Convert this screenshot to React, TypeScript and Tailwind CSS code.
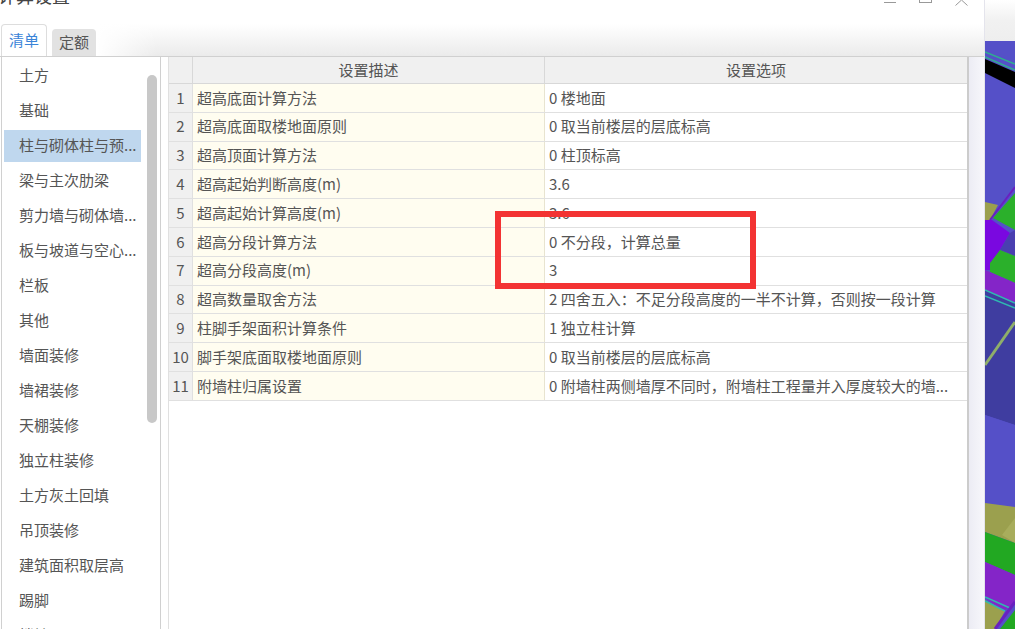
const font = '"Microsoft YaHei", "Noto Sans CJK SC", sans-serif'

const categories = [
  '土方',
  '基础',
  '柱与砌体柱与预...',
  '梁与主次肋梁',
  '剪力墙与砌体墙...',
  '板与坡道与空心...',
  '栏板',
  '其他',
  '墙面装修',
  '墙裙装修',
  '天棚装修',
  '独立柱装修',
  '土方灰土回填',
  '吊顶装修',
  '建筑面积取层高',
  '踢脚',
  '楼地面',
]

const rows = [
  ['超高底面计算方法', '0 楼地面'],
  ['超高底面取楼地面原则', '0 取当前楼层的层底标高'],
  ['超高顶面计算方法', '0 柱顶标高'],
  ['超高起始判断高度(m)', '3.6'],
  ['超高起始计算高度(m)', '3.6'],
  ['超高分段计算方法', '0 不分段，计算总量'],
  ['超高分段高度(m)', '3'],
  ['超高数量取舍方法', '2 四舍五入：不足分段高度的一半不计算，否则按一段计算'],
  ['柱脚手架面积计算条件', '1 独立柱计算'],
  ['脚手架底面取楼地面原则', '0 取当前楼层的层底标高'],
  ['附墙柱归属设置', '0 附墙柱两侧墙厚不同时，附墙柱工程量并入厚度较大的墙...'],
]

// coords are page pixels, the strip of 3d view behind the dialog
const Scene = () => (
  <svg viewBox="985 41 30 588" className="block h-full w-full" preserveAspectRatio="none">
    <rect x="985" y="41" width="30" height="588" fill="#5550c8" />
    <path d="M985 59 L1015 72 V88 L985 73 Z" fill="#000" />
    <path d="M985 52 L1015 64 M985 57 L1015 70" stroke="#2fae8f" strokeWidth="1.5" />
    <path d="M985 202 L998 205 L990 220 L985 220 Z" fill="#9ba04e" />
    <path d="M993 218 L1015 193 V230 Z" fill="#2bb02b" />
    <path d="M990 220 L1015 187" stroke="#6a20c0" strokeWidth="2" />
    <path d="M985 220 L992 220 L1010 233 L1000 250 L990 270 L985 270 Z" fill="#7a08e0" />
    <path d="M1010 233 L1015 230 V256 L1000 250 Z" fill="#4a3fb0" />
    <path d="M1000 250 L1015 256 V283 L990 272 V263 Z" fill="#2bb02b" />
    <path d="M985 270 L990 272 L1015 283 V305 L985 292 Z" fill="#8425c8" />
    <path d="M985 290 L1015 303 V425 L985 415 Z" fill="#3f3da0" />
    <path d="M985 290 L1015 303 M985 296 L1015 308" stroke="#2fb9b0" strokeWidth="1.5" />
    <path d="M985 365 L1015 322" stroke="#8fae6a" strokeWidth="3" />
    <path d="M985 415 L1015 425 V507 L985 503 Z" fill="#5550c8" />
    <path d="M985 503 L1015 507 V543 L985 532 Z" fill="#9ba04e" />
    <path d="M1002 535 L1015 518 V543 Z" fill="#a8ad5c" />
    <path d="M985 532 L1015 543 V575 L985 562 Z" fill="#22a822" />
    <path d="M985 562 L1015 575 V602 L1003 612 L985 597 Z" fill="#8425c8" />
    <path d="M985 600 L1005 611 L995 629 H985 Z" fill="#9ba04e" />
    <path d="M985 597 L1010 608 M985 601 L1005 611" stroke="#2fb9b0" strokeWidth="1.5" />
    <path d="M1015 610 V629 H1000 Z" fill="#22a822" />
    <path d="M1015 602 L995 629" stroke="#6a20c0" strokeWidth="3" />
  </svg>
)

export default function App() {
  return (
    <div className="relative flex h-[629px] w-[1015px] overflow-hidden bg-white text-[15px] text-[#555]" style={{ fontFamily: font }}>
      <div className="flex h-full w-[985px] shrink-0 flex-col border-r border-[#e4e4ec]">
        <div className="flex h-[24px] items-start justify-between pr-[16px]">
          <span className="-ml-[2px] -mt-[18px] text-[18px] leading-[26px] text-[#444]">计算设置</span>
          <div className="flex items-start gap-[23px]">
            <div className="mt-[2px] h-[1px] w-[12px] bg-[#999]" />
            <div className="h-[3px] w-[13px] border-x border-b border-[#999]" />
            <svg width="13" height="6" viewBox="0 0 13 6" className="block">
              <path d="M0.5 5.5 L6.5 0 L12.5 5.5" fill="none" stroke="#999" />
            </svg>
          </div>
        </div>
        <div className="flex h-[32px] items-end pl-[1px]">
          <div className="flex h-[32px] w-[46px] items-center justify-center rounded-t-[4px] border border-b-0 border-[#ddd] bg-white text-[#3a84d8]">清单</div>
          <div className="ml-[5px] flex h-[27px] w-[44px] items-center justify-center rounded-t-[4px] bg-[#e2e2e2]">定额</div>
          <div className="relative ml-[1px] h-full flex-1 bg-gradient-to-b from-white to-[#ebebeb]">
            <div className="absolute inset-y-0 left-0 w-[60px] bg-gradient-to-r from-white to-transparent" />
          </div>
        </div>
        <div className="flex min-h-0 flex-1 border-t border-[#d0d0d0] pl-[1px]">
          <div className="relative h-full w-[160px] shrink-0 overflow-hidden border-x border-[#d0d0d0] pt-[1px]">
            {categories.map((name, i) => (
              <div key={name} className="flex h-[35px] items-center">
                <div className={`ml-[2px] flex h-[32px] w-[137px] items-center pl-[15px] ${i === 2 ? 'bg-[#bfd7ee]' : ''}`}>
                  <span className="whitespace-nowrap">{name}</span>
                </div>
              </div>
            ))}
            <div className="absolute left-[145px] top-[18px] h-[348px] w-[10px] rounded-[5px] bg-[#c8c8c8]" />
          </div>
          <div className="w-[7px] shrink-0" />
          <div className="w-[801px] shrink-0 border-l border-r-2 border-l-[#e0e0e0] border-r-[#cccccc] bg-white">
            <div className="flex h-[27px] border-b border-[#d8d8d8] bg-[#f0f0f0]">
              <div className="w-[24px] shrink-0 border-r border-[#d8d8d8]" />
              <div className="flex w-[352px] shrink-0 items-center justify-center border-r border-[#d8d8d8]">设置描述</div>
              <div className="flex flex-1 items-center justify-center">设置选项</div>
            </div>
            {rows.map(([label, value], i) => (
              <div key={label} className="flex h-[28.8px] border-b border-[#e0e0e0]">
                <div className="flex w-[24px] shrink-0 items-center justify-center border-r border-[#e0e0e0] bg-[#f0f0f0]">{i + 1}</div>
                <div className="flex w-[352px] shrink-0 items-center border-r border-[#e8e4d0] bg-[#fffdf0] pl-[4px]">{label}</div>
                <div className="flex min-w-0 flex-1 items-center whitespace-nowrap pl-[4px]">{value}</div>
              </div>
            ))}
          </div>
          <div className="flex-1 bg-gradient-to-r from-[#ececf4] to-[#f7f7fb]" />
        </div>
      </div>
      <div className="flex h-full min-w-0 flex-1 flex-col">
        <div className="h-[41px] shrink-0 bg-gradient-to-b from-white via-[#f1f1f1] to-[#eeeeee]" />
        <div className="min-h-0 flex-1">
          <Scene />
        </div>
      </div>
      <div className="absolute left-[495px] top-[211px] h-[78px] w-[261px] border-[6px] border-[#f33333]" />
    </div>
  )
}
